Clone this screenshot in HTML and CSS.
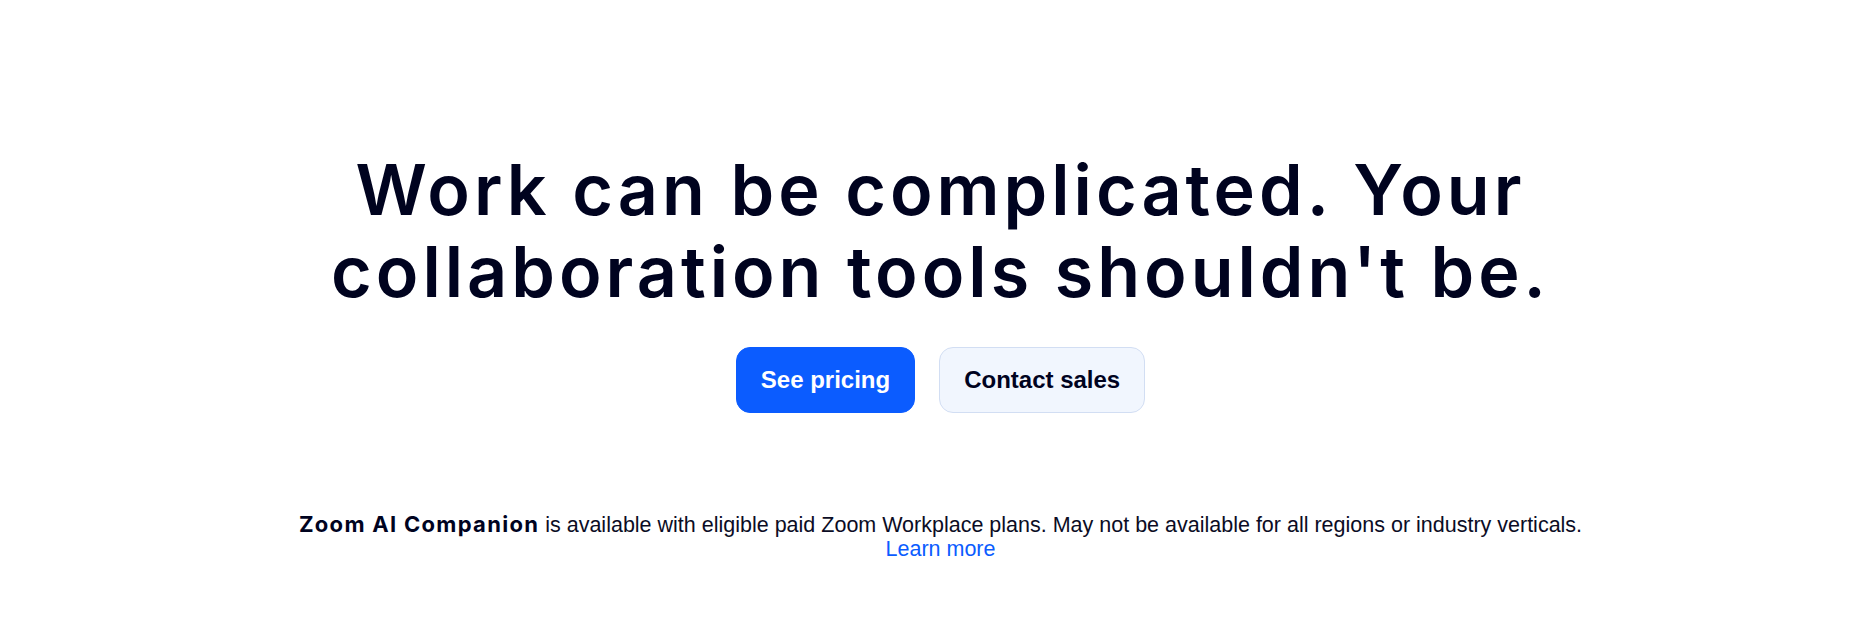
FILE: index.html
```html
<!DOCTYPE html>
<html lang="en">
<head>
<meta charset="utf-8">
<title>Zoom Workplace</title>
<link rel="stylesheet" href="styles.css">
</head>
<body>
<main class="hero">
  <h1 class="hero-title">Work can be complicated. Your<br>collaboration tools shouldn't be.</h1>
  <div class="hero-actions">
    <a class="btn btn-primary" href="#">See pricing</a>
    <a class="btn btn-secondary" href="#">Contact sales</a>
  </div>
  <p class="hero-note"><strong class="note-strong">Zoom AI Companion</strong> is available with eligible paid Zoom Workplace plans. May not be available for all regions or industry verticals.<br><a class="note-link" href="#">Learn more</a></p>
</main>
</body>
</html>
```

FILE: styles.css
```css
* { box-sizing: border-box; }
html, body { margin: 0; padding: 0; background: #ffffff; }
body { font-family: "Liberation Sans", Arial, sans-serif; color: #00031f; }

.hero {
  display: flex;
  flex-direction: column;
  align-items: center;
  padding-top: 149px;
  padding-left: 5px;
  text-align: center;
}

.hero-title {
  margin: 0;
  font-family: Inter, "Noto Sans", sans-serif;
  font-weight: 600;
  font-size: 70px;
  line-height: 82px;
  letter-spacing: 4px;
  color: #00031f;
}

.hero-actions {
  display: flex;
  gap: 24px;
  margin-top: 34px;
}

.btn {
  display: inline-block;
  font-family: "Liberation Sans", Arial, sans-serif;
  font-weight: 700;
  font-size: 24px;
  line-height: 36px;
  padding: 14px 24px;
  border-radius: 14px;
  border: 1px solid transparent;
  text-decoration: none;
}

.btn-primary {
  background: #0b5cff;
  border-color: #0b5cff;
  color: #ffffff;
}

.btn-secondary {
  background: #f1f6fe;
  border-color: #d2def3;
  color: #00031f;
}

.hero-note {
  margin: 99px 0 0;
  font-size: 21.5px;
  line-height: 24px;
  color: #0b0c24;
}

.note-strong {
  font-family: Inter, "Noto Sans", sans-serif;
  font-weight: 700;
  font-size: 22px;
  letter-spacing: 1.3px;
  color: #00031f;
}

.note-link {
  color: #0b5cff;
  text-decoration: none;
}
```
